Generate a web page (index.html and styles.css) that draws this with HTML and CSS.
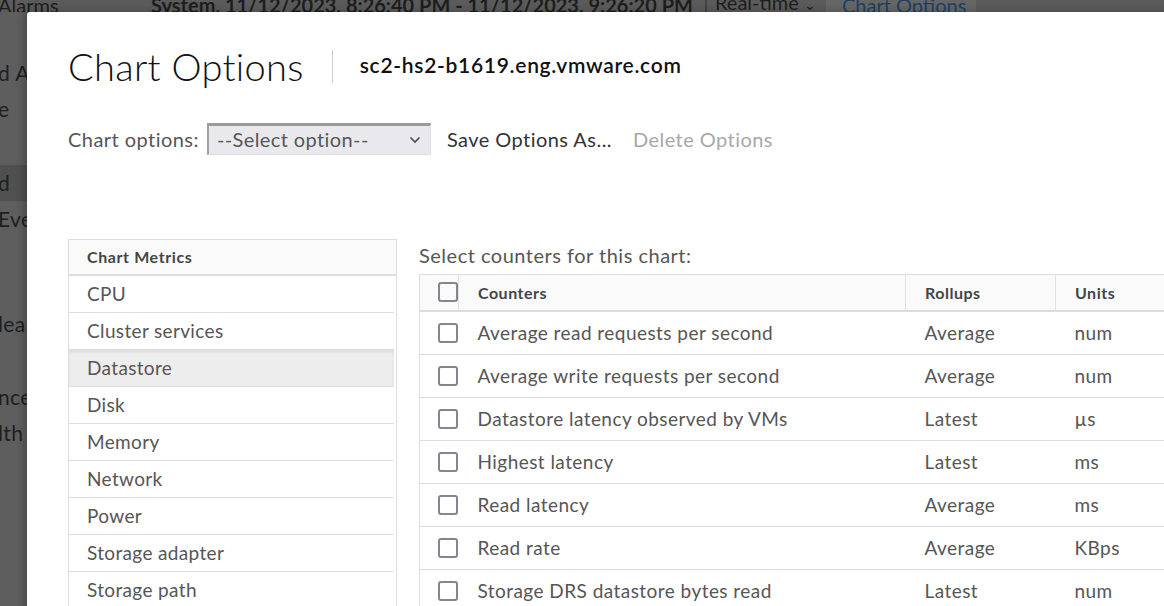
FILE: index.html
```html
<!DOCTYPE html>
<html>
<head>
    <meta charset="UTF-8">
    <meta name="viewport" content="width=device-width, initial-scale=1.0">
    <title>Chart Options</title>
    <link rel="stylesheet" href="styles.css">
</head>
<body>
    <!-- page behind the dialog (dimmed) -->
    <div class="page">
        <div class="topbar">
            <span class="crumb">Alarms</span>
            <span class="period">System, 11/12/2023, 8:26:40 PM - 11/12/2023, 9:26:20 PM</span>
            <span class="timespan">Real-time <span class="caret">&#8964;</span></span>
            <span class="chart-link">Chart Options</span>
        </div>
        <ul class="sidenav">
            <li class="nav-a">d Al</li>
            <li class="nav-b">e</li>
            <li class="nav-c active">d</li>
            <li class="nav-d">Eve</li>
            <li class="nav-e">lea</li>
            <li class="nav-f">nce</li>
            <li class="nav-g">lth</li>
        </ul>
    </div>

    <div class="modal">
        <div class="modal-header">
            <h1>Chart Options</h1>
            <span class="divider"></span>
            <span class="host">sc2-hs2-b1619.eng.vmware.com</span>
        </div>

        <div class="options-row">
            <label for="chartOption">Chart options:</label>
            <div class="select-wrap">
                <select id="chartOption">
                    <option>--Select option--</option>
                </select>
                <svg class="chevron" width="12" height="8" viewBox="0 0 12 8">
                    <path d="M1.5 1.5 L6 6 L10.5 1.5" fill="none" stroke="#4a4a4a" stroke-width="1.6"/>
                </svg>
            </div>
            <a class="action">Save Options As...</a>
            <a class="action disabled">Delete Options</a>
        </div>

        <div class="panels">
            <div class="metrics">
                <div class="metrics-head">Chart Metrics</div>
                <ul class="metrics-list">
                    <li>CPU</li>
                    <li>Cluster services</li>
                    <li class="selected">Datastore</li>
                    <li>Disk</li>
                    <li>Memory</li>
                    <li>Network</li>
                    <li>Power</li>
                    <li>Storage adapter</li>
                    <li>Storage path</li>
                </ul>
            </div>

            <div class="counters">
                <div class="counters-title">Select counters for this chart:</div>
                <table class="grid">
                    <thead>
                        <tr>
                            <th class="col-check"><span class="box"></span></th>
                            <th class="col-name">Counters</th>
                            <th class="col-rollup">Rollups</th>
                            <th class="col-unit">Units</th>
                        </tr>
                    </thead>
                    <tbody>
                        <tr><td class="col-check"><span class="box"></span></td><td>Average read requests per second</td><td>Average</td><td>num</td></tr>
                        <tr><td class="col-check"><span class="box"></span></td><td>Average write requests per second</td><td>Average</td><td>num</td></tr>
                        <tr><td class="col-check"><span class="box"></span></td><td>Datastore latency observed by VMs</td><td>Latest</td><td>µs</td></tr>
                        <tr><td class="col-check"><span class="box"></span></td><td>Highest latency</td><td>Latest</td><td>ms</td></tr>
                        <tr><td class="col-check"><span class="box"></span></td><td>Read latency</td><td>Average</td><td>ms</td></tr>
                        <tr><td class="col-check"><span class="box"></span></td><td>Read rate</td><td>Average</td><td>KBps</td></tr>
                        <tr><td class="col-check"><span class="box"></span></td><td>Storage DRS datastore bytes read</td><td>Latest</td><td>num</td></tr>
                    </tbody>
                </table>
            </div>
        </div>
    </div>
</body>
</html>
```

FILE: styles.css
```css
body {
    font-family: Lato, "Open Sans", sans-serif;
    margin: 0;
    background-color: #5e5e5e;
    color: #222;
    overflow: hidden;
    height: 606px;
}

/* ---------- dimmed page ---------- */

.page {
    height: 100%;
}

.topbar {
    height: 12px;
    overflow: hidden;
    display: flex;
    align-items: flex-end;
    background-color: #5b5b5b;
    font-size: 20px;
    color: #1e1e1e;
}

.topbar span {
    line-height: 24px;
    margin-bottom: -5px;
    white-space: nowrap;
}

.crumb {
    margin-left: -2px;
    width: 153px;
}

.period {
    font-weight: bold;
    padding-right: 12px;
    border-right: 2px solid #444;
}

.timespan {
    padding: 0 10px 0 8px;
}

.caret {
    font-size: 14px;
}

.chart-link {
    background-color: #666;
    padding: 0 10px 0 16px;
    color: #1d3f66;
}

.sidenav {
    list-style: none;
    margin: 0;
    padding: 0;
    font-size: 21px;
    color: #202020;
    letter-spacing: 0.4px;
}

.sidenav li {
    height: 36px;
    line-height: 36px;
    margin-left: -2px;
    white-space: nowrap;
}

.nav-a { margin-top: 43px; }
.nav-c { margin-top: 38px; height: 35px; line-height: 35px; }
.nav-e { margin-top: 69px; }
.nav-f { margin-top: 37px; }

.sidenav li.active {
    background-color: #505050;
}

/* ---------- dialog ---------- */

.modal {
    position: absolute;
    left: 27px;
    top: 12px;
    right: -60px;
    bottom: -40px;
    background-color: white;
    border-radius: 3px 0 0 0;
    box-shadow: -3px 0 8px rgba(0,0,0,0.25);
    padding: 31px 0 0 41px;
    overflow: hidden;
}

.modal-header {
    display: flex;
    align-items: center;
    height: 46px;
}

.modal-header h1 {
    margin: 0;
    font-family: Lato, sans-serif;
    font-weight: 300;
    font-size: 38px;
    color: #111;
    letter-spacing: 0.3px;
}

.divider {
    width: 1px;
    height: 33px;
    background-color: #ccc;
    margin: 0 27px 0 28px;
}

.host {
    font-size: 21px;
    font-weight: 600;
    color: #111;
    margin-top: -4px;
    letter-spacing: 0.7px;
}

.options-row {
    display: flex;
    align-items: center;
    margin-top: 33px;
    height: 33px;
    font-size: 20px;
    letter-spacing: 0.45px;
}

.options-row label {
    color: #565656;
    margin-right: 8px;
}

.select-wrap {
    position: relative;
    margin-right: 16px;
}

.select-wrap select {
    appearance: none;
    -webkit-appearance: none;
    width: 224px;
    height: 32px;
    padding: 0 0 2px 8px;
    font-family: inherit;
    font-size: 20px;
    letter-spacing: 0.4px;
    color: #565656;
    background-color: #e9e9ed;
    border-style: solid;
    border-width: 3px 1px 1px 2px;
    border-color: #9a9a9a #dedee2 #dedee2 #a0a0a0;
    border-radius: 0;
}

.chevron {
    position: absolute;
    right: 10px;
    top: 13px;
}

.action {
    color: #333;
    margin-right: 21px;
}

.action.disabled {
    color: #a8a8a8;
}

.panels {
    display: flex;
    align-items: flex-start;
    gap: 22px;
    margin-top: 84px;
}

/* left list */

.metrics {
    width: 327px;
    flex-shrink: 0;
    border: 1px solid #ddd;
    border-bottom: none;
}

.metrics-head {
    height: 34px;
    line-height: 34px;
    padding-left: 18px;
    background-color: #fafafa;
    border-bottom: 2px solid #ddd;
    font-size: 16px;
    font-weight: bold;
    letter-spacing: 0.6px;
    color: #454545;
}

.metrics-list {
    list-style: none;
    margin: 0;
    padding: 0;
    width: 325px;
}

.metrics-list li {
    height: 36px;
    line-height: 36px;
    padding-left: 18px;
    border-bottom: 1px solid #ddd;
    font-size: 19px;
    letter-spacing: 0.35px;
    color: #565656;
}

.metrics-list li.selected {
    background-color: #ededed;
    box-shadow: inset 0 2px 3px rgba(0,0,0,0.08);
}

/* right table */

.counters {
    flex: 1;
    min-width: 0;
}

.counters-title {
    font-size: 20px;
    letter-spacing: 0.5px;
    color: #565656;
    height: 24px;
    line-height: 24px;
    margin-top: 4px;
    margin-bottom: 7px;
}

.grid {
    border-collapse: collapse;
    width: 836px;
    table-layout: fixed;
    border-left: 1px solid #ddd;
    border-top: 1px solid #ddd;
}

.grid th {
    height: 36px;
    background-color: #fafafa;
    border-bottom: 2px solid #ddd;
    border-right: 1px solid #e2e2e2;
    text-align: left;
    font-size: 16px;
    font-weight: bold;
    letter-spacing: 0.5px;
    color: #454545;
    padding: 0 0 0 19px;
}

.grid td {
    height: 42px;
    border-bottom: 1px solid #ddd;
    font-size: 19px;
    letter-spacing: 0.45px;
    color: #565656;
    padding: 0 0 0 19px;
    white-space: nowrap;
}

.grid .col-check {
    width: 39px;
    padding-left: 18px;
    box-sizing: border-box;
}

.grid td.col-check {
    padding-left: 18px;
}

.col-name { width: 447px; box-sizing: border-box; }
.col-rollup { width: 150px; box-sizing: border-box; }
.col-unit { width: 200px; box-sizing: border-box; }

.box {
    display: block;
    width: 16px;
    height: 16px;
    border: 2px solid #85848f;
    border-radius: 3px;
}
```
